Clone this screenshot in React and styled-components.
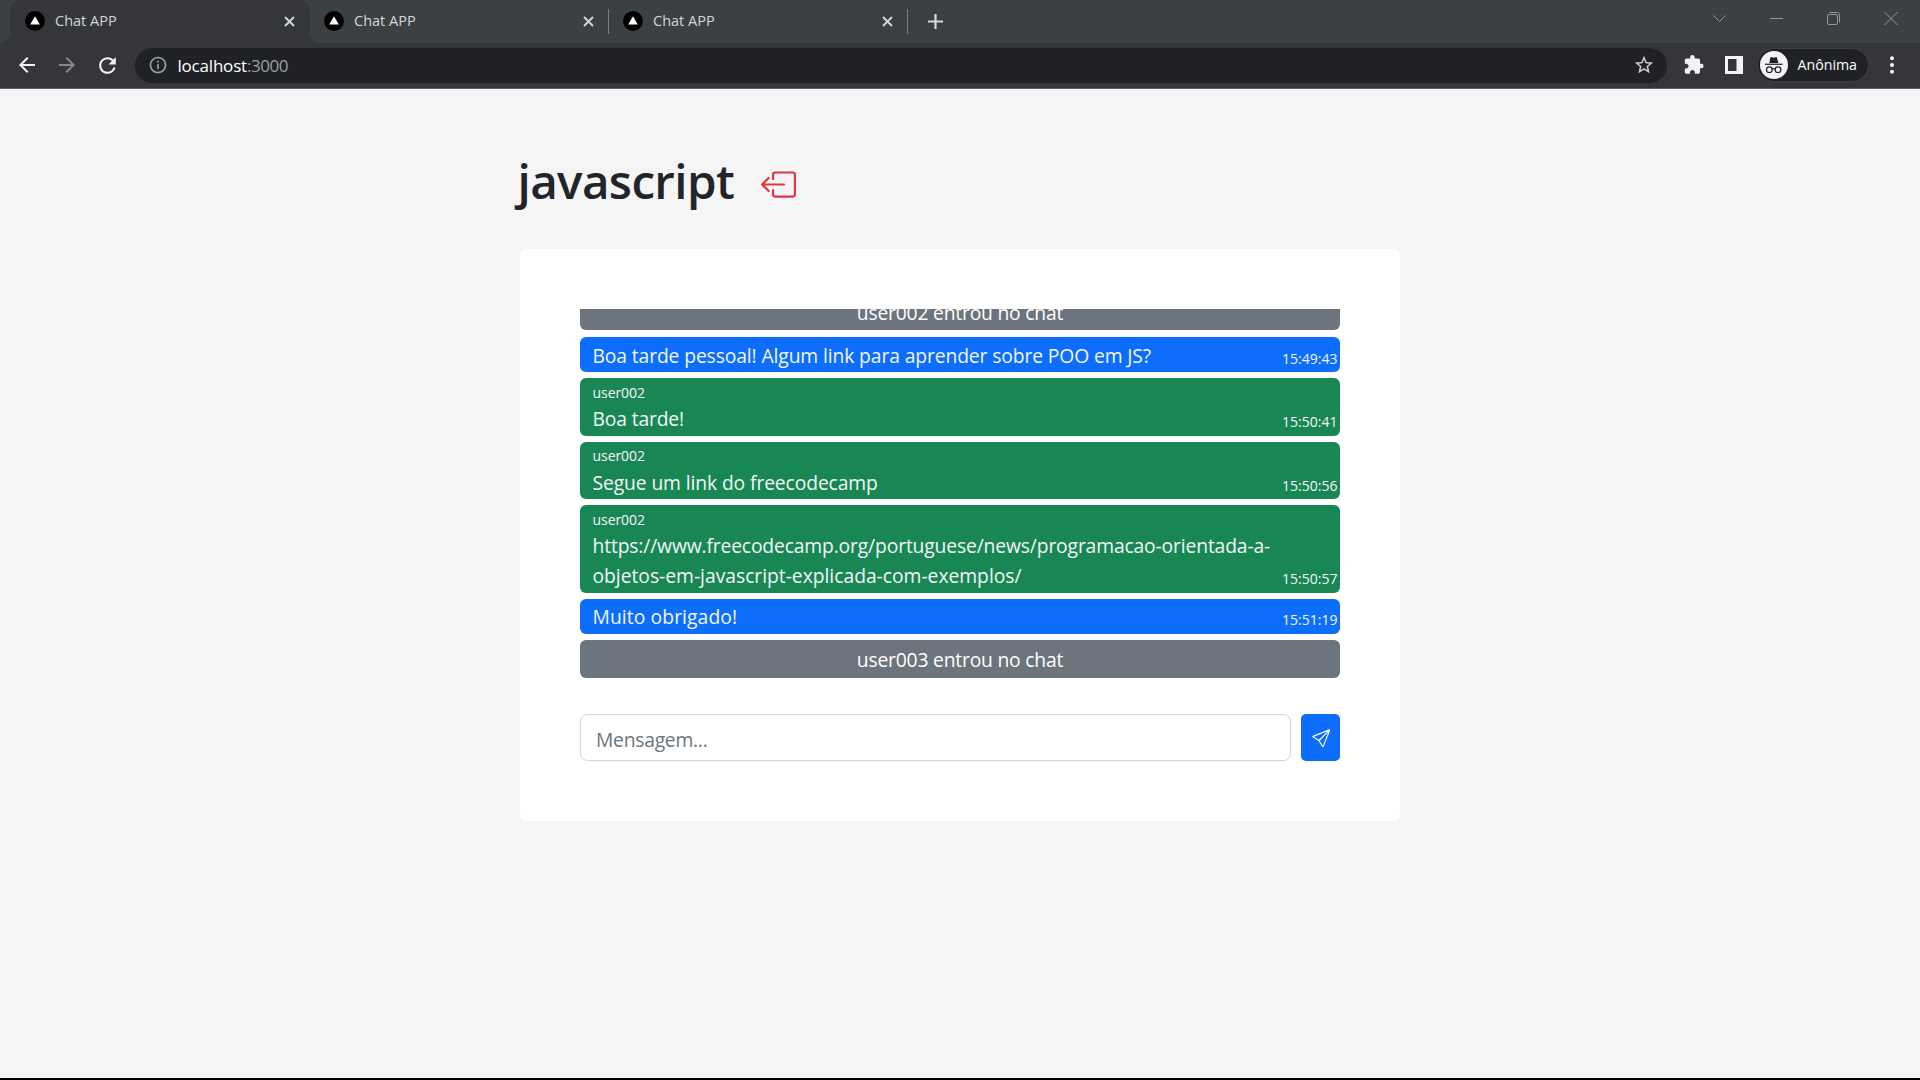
import React from "react";
import styled, { createGlobalStyle, css } from "styled-components";
import { BsBoxArrowLeft, BsSend } from "react-icons/bs";
import {
  MdArrowBack,
  MdArrowForward,
  MdRefresh,
  MdExtension,
  MdStarBorder,
  MdInfoOutline,
} from "react-icons/md";

const GlobalStyle = createGlobalStyle`
  *, *::before, *::after { box-sizing: border-box; }
  body {
    margin: 0;
    background: #f5f5f5;
    font-family: "Open Sans", "Noto Sans", sans-serif;
    overflow: hidden;
  }
`;

const Screen = styled.div`
  display: flex;
  flex-direction: column;
  height: 1080px;
  width: 1920px;
  background: #f5f5f5;
  border-bottom: 2px solid #000;
`;

/* ---------- browser window ---------- */

const TabStrip = styled.div`
  display: flex;
  height: 43px;
  padding-left: 10px;
  background: #3c4043;
`;

const flare = css`
  content: "";
  position: absolute;
  bottom: 0;
  width: 10px;
  height: 10px;
`;

const Tab = styled.div`
  position: relative;
  display: flex;
  align-items: center;
  width: ${(p) => (p.$active ? 300 : 299)}px;
  padding: 0 12.5px 1px ${(p) => (p.$active ? 15 : 14)}px;
  border-radius: 10px 10px 0 0;
  background: ${(p) => (p.$active ? "#35363a" : "transparent")};
  color: #d3d6da;

  ${(p) =>
    p.$active &&
    css`
      &::before {
        ${flare}
        left: -10px;
        background: radial-gradient(circle at 0 0, transparent 9.5px, #35363a 10px);
      }
      &::after {
        ${flare}
        right: -10px;
        background: radial-gradient(circle at 100% 0, transparent 9.5px, #35363a 10px);
      }
    `}
`;

const TabIcon = styled.svg`
  width: 20px;
  height: 20px;
  margin-right: 10px;
`;

const TabTitle = styled.span`
  flex: 1;
  font-size: 14.5px;
  line-height: 20px;
  padding-bottom: 1px;
`;

const Glyph = styled.svg`
  display: block;
  flex: none;
  fill: none;
  stroke: currentColor;
`;

const TabClose = styled(Glyph)`
  margin-right: 2.5px;
`;

const Separator = styled.div`
  align-self: flex-start;
  width: 1px;
  height: 25px;
  margin: 9px 0 0 -1px;
  background: #7b7e81;
`;

const NewTab = styled.div`
  display: flex;
  align-items: center;
  padding: 0 0 1px 20px;
  color: #d6d8db;
`;

const WindowControls = styled.div`
  display: flex;
  align-items: flex-start;
  gap: 44px;
  margin-left: auto;
  padding: 12px 22px 0 0;
  color: #93969a;
`;

const Toolbar = styled.div`
  display: flex;
  align-items: center;
  height: 46px;
  padding: 0 20px 1px 15px;
  background: #35363a;
  border-bottom: 1px solid #616265;
  color: #f1f3f4;
`;

const NavButtons = styled.div`
  display: flex;
  align-items: center;
  gap: 16px;
  width: 120px;
  svg:nth-child(2) {
    color: #85878a;
  }
`;

const AddressBar = styled.div`
  display: flex;
  align-items: center;
  width: 1532px;
  height: 35px;
  padding: 0 12.5px;
  border-radius: 18px;
  background: #202124;
`;

const Url = styled.div`
  flex: 1;
  margin-left: 10px;
  padding-top: 1px;
  font-size: 17px;
  letter-spacing: -0.2px;
  line-height: 24px;
  color: #fff;
  span {
    color: #9aa0a6;
    letter-spacing: -0.45px;
  }
`;

const Actions = styled.div`
  display: flex;
  align-items: center;
  margin-left: 15.5px;
`;

const PanelIcon = styled(Glyph)`
  margin-left: 20.5px;
`;

const ProfilePill = styled.div`
  display: flex;
  align-items: center;
  gap: 10px;
  width: 112px;
  height: 34px;
  margin: 0 21.5px 0 14px;
  padding-left: 2px;
  border: 1px solid #3f4044;
  border-radius: 17px;
  background: #202124;
  font-size: 14.2px;
  line-height: 20px;
  color: #fff;
  span {
    padding-bottom: 1px;
  }
`;

/* ---------- chat page ---------- */

const Page = styled.main`
  width: 880px;
  margin: 0 auto;
`;

const Header = styled.header`
  display: flex;
  align-items: center;
  height: 160px;
  padding-top: 31px;
`;

const RoomName = styled.h1`
  margin: 0 27px 7px -2.5px;
  width: 216px;
  font-size: 47.6px;
  font-weight: 600;
  letter-spacing: -0.64px;
  line-height: 60px;
  white-space: nowrap;
  color: #212529;
`;

const LeaveIcon = styled(BsBoxArrowLeft)`
  width: 35px;
  height: 35px;
  color: #dc3545;
`;

const Card = styled.section`
  height: 572px;
  padding: 60px;
  border-radius: 7px;
  background: #fff;
`;

const MessageList = styled.div`
  display: flex;
  flex-direction: column;
  justify-content: flex-end;
  gap: 6.25px;
  height: 368.75px;
  overflow: hidden;
`;

const Notice = styled.div`
  flex: none;
  height: 37.75px;
  padding: 5.2px 0 0;
  border-radius: 6px;
  background: #6c757d;
  color: #fff;
  font-size: 19.3px;
  letter-spacing: -0.2px;
  line-height: 30px;
  text-align: center;
  &:first-child {
    margin-bottom: 0.6px;
  }
`;

const Bubble = styled.div`
  flex: none;
  display: flex;
  justify-content: space-between;
  padding: 3.5px 2.5px 1.5px 12.5px;
  border-radius: 6px;
  background: ${(p) => (p.$own ? "#0d6efd" : "#198754")};
  color: #f3f6f9;
`;

const Author = styled.div`
  height: 22.2px;
  font-size: 14px;
  letter-spacing: -0.06px;
  line-height: 21px;
`;

const Line = styled.div`
  font-size: 19.3px;
  line-height: 30px;
  letter-spacing: ${(p) => p.$tracking}px;
  white-space: nowrap;
`;

const Time = styled.time`
  align-self: flex-end;
  margin-bottom: 1.9px;
  font-size: 14px;
  line-height: 21px;
`;

const Composer = styled.form`
  display: flex;
  gap: 10px;
  margin-top: 36.25px;
`;

const MessageInput = styled.input`
  flex: 1;
  height: 47px;
  padding: 3px 15px 0;
  border: 1px solid #ced4da;
  border-radius: 7.5px;
  background: #fff;
  font-family: inherit;
  font-size: 19.3px;
  letter-spacing: -0.25px;
  outline: none;
  &::placeholder {
    color: #6c757d;
    opacity: 1;
  }
`;

const SendButton = styled.button`
  display: flex;
  align-items: center;
  justify-content: center;
  width: 39px;
  height: 47px;
  padding: 1px 0 0 1px;
  border: 0;
  border-radius: 5px;
  background: #0d6efd;
  color: #fff;
  font-size: 18.5px;
`;

const messages = [
  { notice: "user002 entrou no chat" },
  { own: true, time: "15:49:43", lines: [["Boa tarde pessoal! Algum link para aprender sobre POO em JS?", -0.115]] },
  { author: "user002", time: "15:50:41", lines: [["Boa tarde!", -0.15]] },
  { author: "user002", time: "15:50:56", lines: [["Segue um link do freecodecamp", -0.107]] },
  {
    author: "user002",
    time: "15:50:57",
    lines: [
      ["https://www.freecodecamp.org/portuguese/news/programacao-orientada-a-", -0.147],
      ["objetos-em-javascript-explicada-com-exemplos/", -0.02],
    ],
  },
  { own: true, time: "15:51:19", lines: [["Muito obrigado!", 0.09]] },
  { notice: "user003 entrou no chat" },
];

function Favicon() {
  return (
    <TabIcon viewBox="0 0 20 20">
      <circle cx="10" cy="10" r="10" fill="#000" />
      <path d="M10 5.2 L14.8 13.6 H5.2 Z" fill="#fff" />
    </TabIcon>
  );
}

function BrowserTab({ active }) {
  return (
    <Tab $active={active}>
      <Favicon />
      <TabTitle>Chat APP</TabTitle>
      <TabClose width="11" height="11" viewBox="0 0 11 11" strokeWidth="1.9">
        <path d="M1 1 L10 10 M10 1 L1 10" />
      </TabClose>
    </Tab>
  );
}

function IncognitoBadge() {
  return (
    <svg width="28" height="28" viewBox="0 0 84 84">
      <circle cx="42" cy="42" r="42" fill="#f1f3f4" />
      <path d="M28 36 L31 20 Q32 17 36 18.5 L41 20 L46 18.5 Q50 17 51 20 L55 36 Z" fill="#202124" />
      <rect x="15" y="38" width="53" height="3.6" fill="#202124" />
      <g fill="none" stroke="#202124" strokeWidth="3.6">
        <circle cx="28" cy="56" r="8.5" />
        <circle cx="54" cy="56" r="8.5" />
        <path d="M36 55 Q41 51 46 55" />
      </g>
    </svg>
  );
}

export default function App() {
  return (
    <>
      <GlobalStyle />
      <Screen>
        <TabStrip>
          <BrowserTab active />
          <BrowserTab />
          <Separator />
          <BrowserTab />
          <Separator />
          <NewTab>
            <Glyph width="15" height="15" viewBox="0 0 15 15" strokeWidth="2.2">
              <path d="M7.5 0 V15 M0 7.5 H15" />
            </Glyph>
          </NewTab>
          <WindowControls>
            <Glyph width="13" height="13" viewBox="0 0 13 13">
              <path d="M0.5 3.5 L6.5 9.5 L12.5 3.5" />
            </Glyph>
            <Glyph width="13" height="13" viewBox="0 0 13 13">
              <path d="M0 6.5 H13" />
            </Glyph>
            <Glyph width="13" height="13" viewBox="0 0 13 13">
              <rect x="0.5" y="2.5" width="10" height="10" rx="1.5" />
              <path d="M2.5 0.5 H10.5 Q12.5 0.5 12.5 2.5 V10.5" />
            </Glyph>
            <Glyph width="14" height="13" viewBox="0 0 14 13">
              <path d="M0.5 0 L13.5 13 M13.5 0 L0.5 13" />
            </Glyph>
          </WindowControls>
        </TabStrip>

        <Toolbar>
          <NavButtons>
            <MdArrowBack size={24} />
            <MdArrowForward size={24} />
            <MdRefresh size={25} />
          </NavButtons>
          <AddressBar>
            <MdInfoOutline size={20} color="#9aa0a6" />
            <Url>
              localhost<span>:3000</span>
            </Url>
            <MdStarBorder size={22} color="#d0d2d5" />
          </AddressBar>
          <Actions>
            <MdExtension size={21.5} />
            <PanelIcon width="18" height="18" viewBox="0 0 18 18">
              <path d="M0 0 H18 V18 H0 Z M3 3 V15 H11.5 V3 Z" fill="#f1f3f4" fillRule="evenodd" stroke="none" />
            </PanelIcon>
            <ProfilePill>
              <IncognitoBadge />
              <span>Anônima</span>
            </ProfilePill>
            <svg width="4" height="18" viewBox="0 0 4 18" fill="#f1f3f4">
              <circle cx="2" cy="2.2" r="2" />
              <circle cx="2" cy="9" r="2" />
              <circle cx="2" cy="15.8" r="2" />
            </svg>
          </Actions>
        </Toolbar>

        <Page>
          <Header>
            <RoomName>javascript</RoomName>
            <LeaveIcon />
          </Header>
          <Card>
            <MessageList>
              {messages.map((m, i) =>
                m.notice ? (
                  <Notice key={i}>{m.notice}</Notice>
                ) : (
                  <Bubble key={i} $own={m.own}>
                    <div>
                      {m.author && <Author>{m.author}</Author>}
                      {m.lines.map(([text, tracking]) => (
                        <Line key={text} $tracking={tracking}>
                          {text}
                        </Line>
                      ))}
                    </div>
                    <Time>{m.time}</Time>
                  </Bubble>
                )
              )}
            </MessageList>
            <Composer>
              <MessageInput placeholder="Mensagem..." />
              <SendButton type="button" aria-label="Enviar">
                <BsSend />
              </SendButton>
            </Composer>
          </Card>
        </Page>
      </Screen>
    </>
  );
}
